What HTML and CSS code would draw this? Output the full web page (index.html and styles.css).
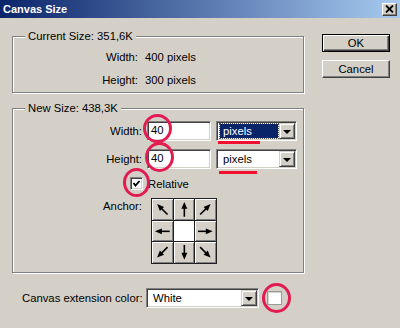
FILE: index.html
```html
<!DOCTYPE html>
<html lang="en">
<head>
  <meta charset="UTF-8">
  <title>Canvas Size</title>
  <link rel="stylesheet" href="styles.css">
</head>
<body>
  <div class="window">
    <div class="titlebar">
      <span class="title">Canvas Size</span>
      <span class="close">
        <svg width="9" height="8" viewBox="0 0 9 8"><path d="M1 0.5 L8 7.5 M8 0.5 L1 7.5" stroke="#000" stroke-width="1.8"/></svg>
      </span>
    </div>
    <div class="dialog">
      <div class="main">
        <fieldset class="group current">
          <legend>Current Size: 351,6K</legend>
          <div class="info">
            <span class="label">Width:</span><span>400 pixels</span>
            <span class="label">Height:</span><span>300 pixels</span>
          </div>
        </fieldset>
        <fieldset class="group newsize">
          <legend>New Size: 438,3K</legend>
          <div class="form">
            <span class="label">Width:</span>
            <div class="field">40</div>
            <div class="select focused"><span class="value">pixels</span><span class="drop"></span></div>

            <span class="label">Height:</span>
            <div class="field">40</div>
            <div class="select"><span class="value">pixels</span><span class="drop"></span></div>

            <span class="checkbox">
              <svg width="9" height="9" viewBox="0 0 9 9"><polyline points="1.5,4 3.5,6.5 7.5,2" fill="none" stroke="#000" stroke-width="1.8"/></svg>
            </span>
            <span class="check-label">Relative</span>

            <span class="label anchor-label">Anchor:</span>
            <div class="anchor">
              <span class="cell"><svg viewBox="0 0 21 21"><g transform="rotate(-45 10.5 10.5)"><path d="M10.5 18 V8"/><polygon points="10.5,3 7.5,10 13.5,10"/></g></svg></span>
              <span class="cell"><svg viewBox="0 0 21 21"><g><path d="M10.5 18 V8"/><polygon points="10.5,3 7.5,10 13.5,10"/></g></svg></span>
              <span class="cell"><svg viewBox="0 0 21 21"><g transform="rotate(45 10.5 10.5)"><path d="M10.5 18 V8"/><polygon points="10.5,3 7.5,10 13.5,10"/></g></svg></span>
              <span class="cell"><svg viewBox="0 0 21 21"><g transform="rotate(-90 10.5 10.5)"><path d="M10.5 18 V8"/><polygon points="10.5,3 7.5,10 13.5,10"/></g></svg></span>
              <span class="cell center"></span>
              <span class="cell"><svg viewBox="0 0 21 21"><g transform="rotate(90 10.5 10.5)"><path d="M10.5 18 V8"/><polygon points="10.5,3 7.5,10 13.5,10"/></g></svg></span>
              <span class="cell"><svg viewBox="0 0 21 21"><g transform="rotate(-135 10.5 10.5)"><path d="M10.5 18 V8"/><polygon points="10.5,3 7.5,10 13.5,10"/></g></svg></span>
              <span class="cell"><svg viewBox="0 0 21 21"><g transform="rotate(180 10.5 10.5)"><path d="M10.5 18 V8"/><polygon points="10.5,3 7.5,10 13.5,10"/></g></svg></span>
              <span class="cell"><svg viewBox="0 0 21 21"><g transform="rotate(135 10.5 10.5)"><path d="M10.5 18 V8"/><polygon points="10.5,3 7.5,10 13.5,10"/></g></svg></span>
            </div>
          </div>
        </fieldset>
        <div class="ext">
          <span class="ext-label">Canvas extension color:</span>
          <div class="select wide"><span class="value">White</span><span class="drop"></span></div>
          <span class="swatch"></span>
        </div>
      </div>
      <div class="buttons">
        <button class="btn default">OK</button>
        <button class="btn">Cancel</button>
      </div>
    </div>

    <!-- red marks drawn over the dialog -->
    <span class="ring ring-width"></span>
    <span class="ring ring-height"></span>
    <span class="ring ring-check"></span>
    <span class="ring ring-swatch"></span>
    <span class="mark mark-1"></span>
    <span class="mark mark-2"></span>
  </div>
</body>
</html>
```

FILE: styles.css
```css
body {
  margin: 0;
  background: #d4d0c8;
  font-family: 'Liberation Sans', Arial, sans-serif;
  font-size: 11.3px;
  color: #000;
}
.window {
  position: relative;
  width: 400px;
  height: 328px;
  overflow: hidden;
  background: #d4d0c8;
}
.titlebar {
  height: 18px;
  display: flex;
  align-items: center;
  justify-content: space-between;
  padding: 0 3px;
  background: linear-gradient(to right, #0a246a, #a6caf0);
}
.title {
  color: #fff;
  font-weight: 700;
  font-size: 11px;
}
.close {
  width: 15px;
  height: 13px;
  box-sizing: border-box;
  display: flex;
  align-items: center;
  justify-content: center;
  background: #d4d0c8;
  border: 1px solid;
  border-color: #fff #404040 #404040 #fff;
  box-shadow: inset -1px -1px 0 #808080;
}
.dialog {
  display: flex;
}
.main {
  margin-left: 12px;
  width: 292px;
}
.group {
  margin: 0;
  padding: 0;
  min-width: 0;
  border: 1px solid #808080;
  box-shadow: inset 1px 1px 0 #fff, 1px 1px 0 #fff;
}
.group legend {
  margin-left: 12px;
  padding: 0 3px;
  line-height: 13px;
  background: #d4d0c8;
}
.current {
  margin-top: 12px;
  padding-top: 3px;
}
.info {
  display: grid;
  grid-template-columns: 125px auto;
  column-gap: 7px;
  line-height: 23px;
}
.label {
  text-align: right;
}
.newsize {
  margin-top: 9px;
  padding: 6px 0 8px;
}
.form {
  display: grid;
  grid-template-columns: 129px 64px 81px;
  grid-template-rows: 20px 20px 13px 66px;
  column-gap: 5px;
  row-gap: 8px;
  align-items: center;
}
.field {
  height: 20px;
  box-sizing: border-box;
  padding: 0 3px;
  line-height: 16px;
  background: #fff;
  border: 1px solid;
  border-color: #808080 #fff #fff #808080;
  box-shadow: inset 1px 1px 0 #404040, inset -1px -1px 0 #d4d0c8;
}
.select {
  height: 20px;
  box-sizing: border-box;
  display: flex;
  padding: 1px;
  background: #fff;
  border: 1px solid;
  border-color: #808080 #fff #fff #808080;
  box-shadow: inset 1px 1px 0 #404040, inset -1px -1px 0 #d4d0c8;
}
.select .value {
  flex: 1;
  margin: 1px 1px 1px 2px;
  padding-left: 3px;
  line-height: 14px;
}
.select.focused .value {
  background: #0a246a;
  color: #fff;
  outline: 1px dotted #555;
}
.drop {
  width: 16px;
  height: 16px;
  box-sizing: border-box;
  display: flex;
  align-items: center;
  justify-content: center;
  background: #d4d0c8;
  border: 1px solid;
  border-color: #d4d0c8 #404040 #404040 #d4d0c8;
  box-shadow: inset 1px 1px 0 #fff, inset -1px -1px 0 #808080;
}
.drop::after {
  content: "";
  border-top: 4px solid #000;
  border-left: 4px solid transparent;
  border-right: 4px solid transparent;
  margin-top: 1px;
}
.checkbox {
  justify-self: end;
  margin-right: -1px;
  width: 13px;
  height: 13px;
  box-sizing: border-box;
  display: flex;
  align-items: center;
  justify-content: center;
  background: #fff;
  border: 1px solid;
  border-color: #808080 #fff #fff #808080;
  box-shadow: inset 1px 1px 0 #404040, inset -1px -1px 0 #d4d0c8;
}
.check-label {
  grid-column: 2 / span 2;
  padding-left: 1px;
}
.anchor-label {
  align-self: start;
  padding-top: 2px;
}
.anchor {
  grid-column: 2 / span 2;
  margin-left: 4px;
  width: 66px;
  height: 66px;
  box-sizing: border-box;
  display: grid;
  grid-template-columns: repeat(3, 1fr);
  gap: 1px;
  padding: 1px;
  background: #202020;
}
.cell {
  display: block;
  background: #d4d0c8;
  box-shadow: inset 1px 1px 0 #fff, inset -1px -1px 0 #808080;
}
.cell svg {
  display: block;
  width: 100%;
  height: 100%;
}
.cell path {
  stroke: #000;
  stroke-width: 1.6;
}
.cell polygon {
  fill: #000;
}
.cell.center {
  background: #fff;
  box-shadow: none;
}
.ext {
  margin-top: 15px;
  padding-left: 10px;
  display: flex;
  align-items: center;
}
.ext-label {
  width: 120px;
  margin-right: 4px;
  white-space: nowrap;
}
.select.wide {
  width: 113px;
}
.swatch {
  width: 15px;
  height: 14px;
  box-sizing: border-box;
  margin-left: 8px;
  background: #fff;
  border: 1px solid #9c9a94;
  box-shadow: inset 1px 1px 0 #d4d0c8;
}
.buttons {
  margin: 16px 0 0 18px;
  width: 68px;
  display: flex;
  flex-direction: column;
  gap: 8px;
}
.btn {
  height: 18px;
  padding: 0;
  font: inherit;
  color: #000;
  background: #d4d0c8;
  border: 1px solid;
  border-color: #fff #404040 #404040 #fff;
  box-shadow: inset -1px -1px 0 #808080;
}
.btn.default {
  border: 1px solid #000;
  box-shadow: inset 1px 1px 0 #fff, inset -1px -1px 0 #404040, inset -2px -2px 0 #808080;
}
.ring {
  position: absolute;
  box-sizing: border-box;
  border: 3px solid #e21c50;
  border-radius: 50%;
}
.ring-width { left: 143px; top: 114px; width: 29px; height: 29px; }
.ring-height { left: 145px; top: 142px; width: 29px; height: 30px; }
.ring-check { left: 123px; top: 168px; width: 27px; height: 29px; }
.ring-swatch { left: 262px; top: 283px; width: 29px; height: 30px; }
.mark {
  position: absolute;
  height: 3px;
  background: #f0102e;
}
.mark-1 { left: 218px; top: 141px; width: 42px; }
.mark-2 { left: 219px; top: 171px; width: 38px; }
```
